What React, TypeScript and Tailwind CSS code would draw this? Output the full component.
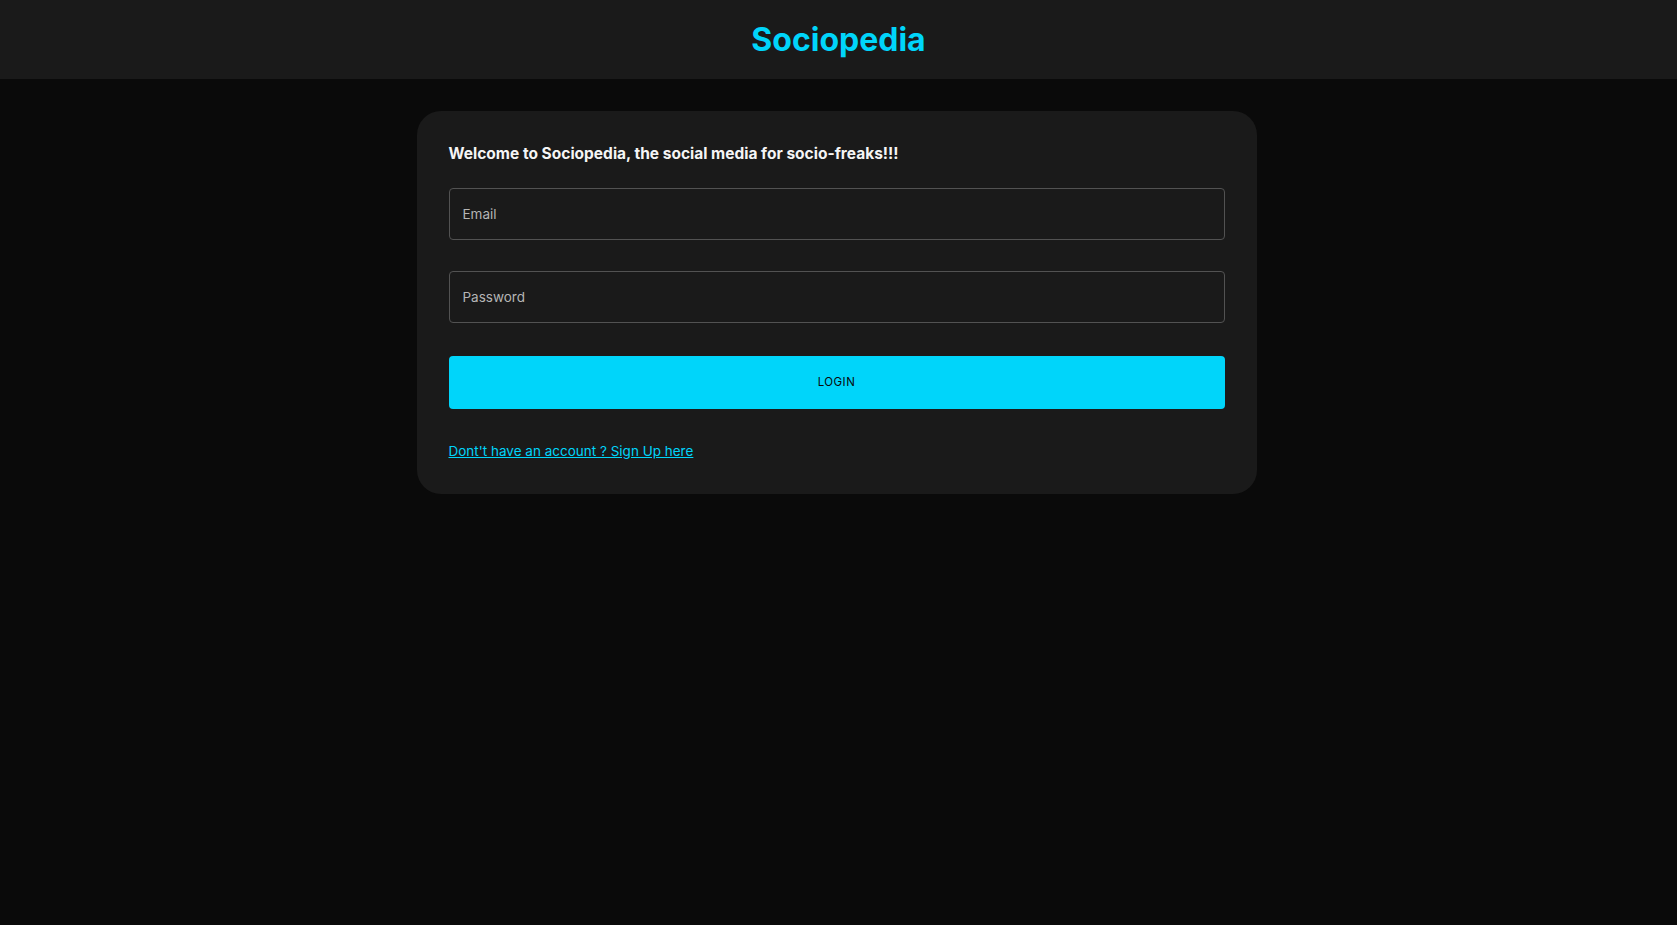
export default function App() {
  return (
    <div className="min-h-screen w-full bg-[#0a0a0a] font-['Inter',sans-serif]">
      <header className="flex h-[79px] w-full items-center justify-center bg-[#1a1a1a]">
        <h1 className="text-[32px] font-bold leading-none text-[#00d5fa]">Sociopedia</h1>
      </header>

      <div className="mx-auto mt-8 w-[840px] -translate-x-[2px] rounded-3xl bg-[#1a1a1a] p-8">
        <h5 className="mb-6 text-[15.5px] font-bold leading-[21px] text-[#f5f5f5]">
          Welcome to Sociopedia, the social media for socio-freaks!!!
        </h5>

        <form className="grid gap-[31px]" onSubmit={(e) => e.preventDefault()}>
          <input
            type="email"
            placeholder="Email"
            className="h-[52px] w-full rounded border border-[#525252] bg-transparent px-[13px] text-[13.5px] text-[#e0e0e0] placeholder:text-[#b5b5b5] outline-none"
          />
          <input
            type="password"
            placeholder="Password"
            className="h-[52px] w-full rounded border border-[#525252] bg-transparent px-[13px] text-[13.5px] text-[#e0e0e0] placeholder:text-[#b5b5b5] outline-none"
          />
        </form>

        <button
          type="button"
          className="mt-[33px] mb-8 flex h-[53px] w-full items-center justify-center rounded bg-[#00d5fa] text-[11.5px] font-normal uppercase tracking-[0.04em] text-[#0a0a0a]"
        >
          Login
        </button>

        <a href="#" className="block text-[13.5px] leading-[21px] text-[#00d5fa] underline">
          Dont't have an account ? Sign Up here
        </a>
      </div>
    </div>
  );
}
